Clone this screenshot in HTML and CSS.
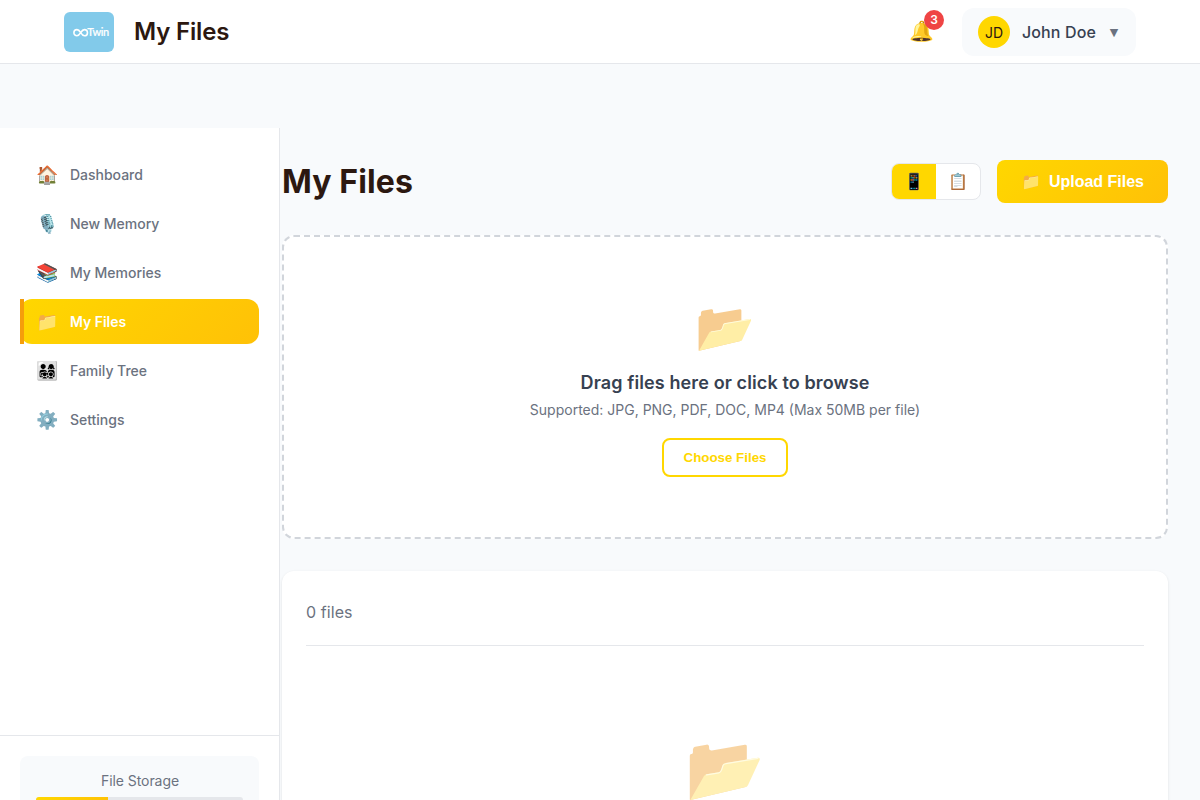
FILE: index.html
```html
<!DOCTYPE html>
<html lang="en">
<head>
<meta charset="utf-8">
<title>My Files</title>
<link rel="stylesheet" href="styles.css">
</head>
<body>
<header class="header">
  <div class="header-left">
    <svg class="logo" viewBox="0 0 50 40" width="50" height="40" role="img" aria-label="Twin">
      <rect width="50" height="40" rx="6" fill="#82caea"/>
      <path d="M16.7 20.7C15.4 18.6 14.5 17.6 13 17.6a3.1 3.1 0 0 0 0 6.2c1.5 0 2.4-1 3.7-3.1s2.2-3.1 3.7-3.1a3.1 3.1 0 0 1 0 6.2c-1.5 0-2.4-1-3.7-3.1z" fill="none" stroke="#fff" stroke-width="1.6"/>
      <text class="logo-text" x="23.2" y="24" textLength="22" lengthAdjust="spacing">Twin</text>
    </svg>
    <h1 class="header-title">My Files</h1>
  </div>
  <div class="header-right">
    <button class="bell">🔔<span class="badge">3</span></button>
    <div class="user">
      <div class="avatar">JD</div>
      <span class="user-name">John Doe</span>
      <span class="caret">▼</span>
    </div>
  </div>
</header>
<div class="layout">
  <aside class="sidebar">
    <nav class="nav">
      <a class="nav-item"><span class="nav-icon">🏠</span><span class="nav-label">Dashboard</span></a>
      <a class="nav-item"><span class="nav-icon">🎙️</span><span class="nav-label">New Memory</span></a>
      <a class="nav-item"><span class="nav-icon">📚</span><span class="nav-label">My Memories</span></a>
      <a class="nav-item active"><span class="nav-icon">📁</span><span class="nav-label">My Files</span></a>
      <a class="nav-item"><span class="nav-icon">👨‍👩‍👧‍👦</span><span class="nav-label">Family Tree</span></a>
      <a class="nav-item"><span class="nav-icon">⚙️</span><span class="nav-label">Settings</span></a>
    </nav>
    <div class="sidebar-footer">
      <div class="storage">
        <div class="storage-label">File Storage</div>
        <div class="storage-bar"><div class="storage-fill" style="width:35%"></div></div>
      </div>
    </div>
  </aside>
  <main class="main">
    <div class="page-head">
      <h2 class="page-title">My Files</h2>
      <div class="actions">
        <div class="toggle">
          <button class="toggle-btn on">📱</button>
          <button class="toggle-btn">📋</button>
        </div>
        <button class="upload"><span class="upload-icon">📁</span>Upload Files</button>
      </div>
    </div>
    <section class="dropzone">
      <div class="drop-icon">📂</div>
      <h3 class="drop-title">Drag files here or click to browse</h3>
      <p class="drop-text">Supported: JPG, PNG, PDF, DOC, MP4 (Max 50MB per file)</p>
      <button class="choose">Choose Files</button>
    </section>
    <section class="files">
      <div class="files-head">0 files</div>
      <div class="empty-icon">📂</div>
    </section>
  </main>
</div>
</body>
</html>
```
FILE: styles.css
```css
* { box-sizing: border-box; margin: 0; padding: 0; }
body {
  height: 800px;
  overflow: hidden;
  background: #f8fafc;
  font-family: Inter, "Liberation Sans", sans-serif;
  color: #374151;
  line-height: 1.6;
}
button { font-family: "Liberation Sans", Arial, sans-serif; border: 0; background: none; }
.header {
  display: flex; justify-content: space-between; align-items: center;
  height: 64px; padding: 0 64px;
  background: #fff; border-bottom: 1px solid #e5e7eb;
}
.header-left { display: flex; align-items: center; gap: 20px; }
.logo { display: block; }
.logo-text { font: 500 11px Lato, sans-serif; fill: #fff; stroke: #fff; stroke-width: .2; }
.header-title { font-size: 24px; font-weight: 600; letter-spacing: -.16px; color: #2c1810; line-height: 38px; }
.header-right { display: flex; align-items: center; gap: 20px; }
.bell { position: relative; padding: 8px; font-size: 20px; line-height: 23px; }
.badge {
  position: absolute; top: -2px; right: -2px;
  width: 20px; height: 20px; border-radius: 50%;
  background: #ef4444; color: #fff;
  font: 600 12px/20px Inter, sans-serif; text-align: center;
}
.user {
  display: flex; align-items: center; gap: 12px;
  height: 48px; padding: 8px 16px; border-radius: 12px; background: #f8fafc;
}
.avatar {
  width: 32px; height: 32px; border-radius: 50%;
  background: #ffd700; color: #2c1810;
  font-size: 14px; line-height: 33px; text-align: center;
}
.user-name { padding-top: 2px; font-weight: 500; letter-spacing: .13px; }
.caret { padding-top: 2px; font-family: "DejaVu Sans", sans-serif; width: 12px; text-align: center; font-size: 11px; color: #6b7280; }
.layout { display: flex; margin-top: 64px; height: 672px; }
.sidebar {
  display: flex; flex-direction: column; flex: none;
  width: 280px; background: #fff; border-right: 1px solid #e5e7eb;
}
.nav { flex: 1; display: flex; flex-direction: column; gap: 4px; padding: 24px 20px; }
.nav-item {
  position: relative;
  display: flex; align-items: center; gap: 12px;
  height: 45px; padding: 0 16px; border-radius: 12px;
  font-size: 14px; font-weight: 500; letter-spacing: -.02px; color: #6b7280;
}
.nav-icon { width: 22px; font-size: 18px; line-height: 29px; white-space: nowrap; }
.nav-label { padding-top: 1px; }
.nav-item.active { background: linear-gradient(135deg, #ffd700, #ffc107); color: #fff; font-weight: 600; }
.nav-item.active::before {
  content: ""; position: absolute; left: 0; top: 0; bottom: 0; width: 4px; background: #f59e0b;
}
.sidebar-footer { height: 65px; padding: 20px 20px 0; border-top: 1px solid #e5e7eb; overflow: hidden; }
.storage { height: 100px; padding: 14px 16px; border-radius: 8px; background: #f8fafc; }
.storage-label { margin-bottom: 5px; padding-left: 1px; font-size: 14px; line-height: 22px; letter-spacing: -.06px; text-align: center; color: #6b7280; }
.storage-bar { height: 6px; border-radius: 3px; background: #e5e7eb; overflow: hidden; }
.storage-fill { height: 100%; background: linear-gradient(135deg, #ffd700, #ffc107); }
.main { flex: 1; padding: 32px 32px 0 2px; overflow: hidden; }
.page-head { display: flex; justify-content: space-between; align-items: center; height: 43px; margin-bottom: 32px; }
.page-title { font-size: 32px; font-weight: 700; line-height: 43px; letter-spacing: .12px; color: #2c1810; }
.actions { display: flex; align-items: center; gap: 16px; }
.toggle { display: flex; border: 1px solid #e5e7eb; border-radius: 8px; background: #fff; overflow: hidden; }
.toggle-btn { width: 44px; height: 35px; font-size: 16px; line-height: 19px; }
.toggle-btn.on { background: #ffd700; }
.upload {
  display: flex; align-items: center; gap: 8px;
  height: 43px; padding: 0 24px; border-radius: 8px;
  background: linear-gradient(135deg, #ffd700, #ffc107);
  color: #fff; font-size: 16px; font-weight: 600;
}
.dropzone {
  display: flex; flex-direction: column; align-items: center;
  height: 304px; padding-top: 51px; margin-bottom: 32px;
  border: 2px dashed #d1d5db; border-radius: 12px; background: #fff;
}
.drop-icon { font-size: 48px; line-height: 77px; opacity: .6; margin-bottom: 3px; }
.drop-title { font-size: 18px; font-weight: 600; line-height: 29px; letter-spacing: .11px; }
.drop-text { font-size: 14px; line-height: 22px; margin: 2px 0 17px; color: #6b7280; }
.choose {
  height: 39px; width: 126px; border: 2px solid #ffd700; border-radius: 8px;
  background: #fff; color: #ffd700; font-size: 13.333px; font-weight: 600;
}
.files {
  height: 500px; padding: 24px; border-radius: 12px; background: #fff;
  box-shadow: 0 1px 3px rgba(0, 0, 0, .1);
}
.files-head { height: 51px; line-height: 35px; letter-spacing: .08px; border-bottom: 1px solid #e5e7eb; color: #6b7280; }
.empty-icon { margin-top: 71px; text-align: center; font-size: 64px; line-height: 102px; opacity: .5; }
```
